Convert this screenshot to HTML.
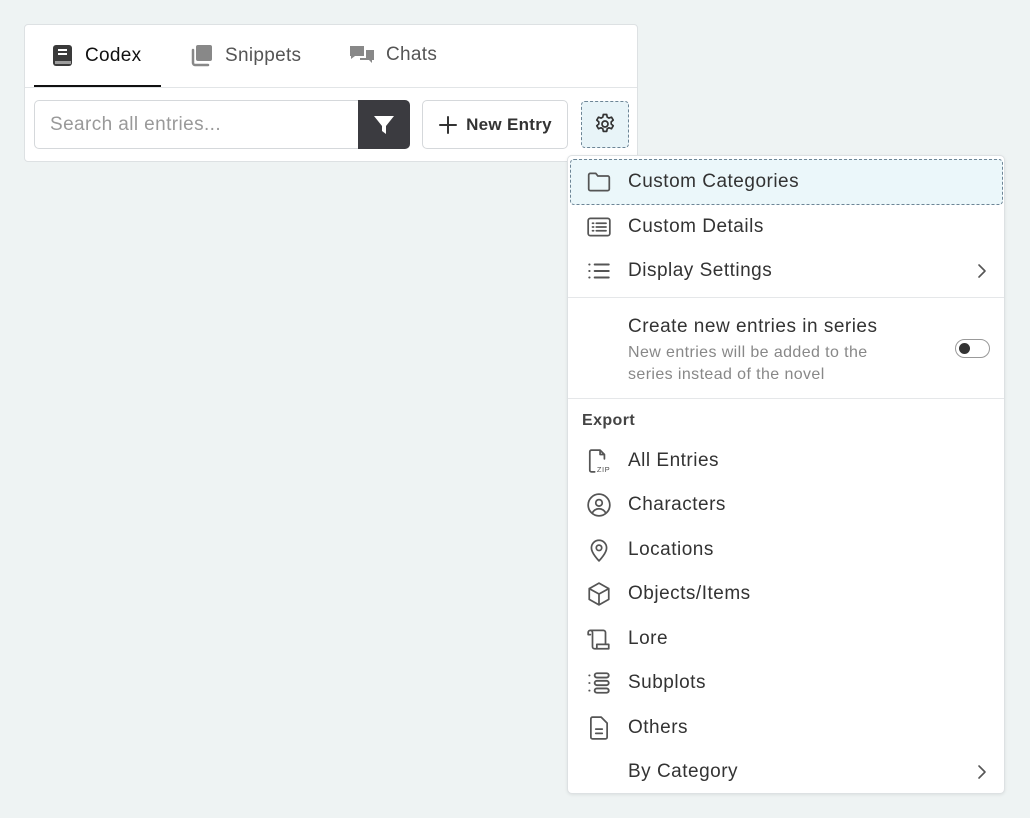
<!DOCTYPE html>
<html><head><style>
*{box-sizing:border-box;margin:0;padding:0}
body{width:1030px;height:818px;background:#eef3f3;font-family:"Liberation Sans",sans-serif;position:relative;overflow:hidden;color:#333}
.abs{position:absolute}
.card{left:24px;top:24px;width:614px;height:138px;background:#fff;border:1px solid #dde1e3;border-radius:4px}
.tab{position:absolute;top:44px;font-size:19px;display:flex;align-items:center;gap:11px;letter-spacing:.3px}
.menu{left:567px;top:155px;width:438px;height:639px;background:#fff;border:1px solid #dde1e3;border-radius:5px;box-shadow:0 1px 3px rgba(0,0,0,.08)}
.it{position:absolute;left:0;width:436px;height:44px;display:flex;align-items:center;font-size:19px;color:#333;letter-spacing:.5px}
.it svg{position:absolute;left:18px;width:26px;height:26px}
.it span{position:absolute;left:60px}
.chev{position:absolute;right:16px}
svg{stroke-linecap:round;stroke-linejoin:round}
</style></head><body>
<div class="abs card"></div>
<div class="tab" style="left:52px;color:#111"><svg width="22" height="24" viewBox="0 0 22 24"><rect x="1" y="1" width="19" height="21" rx="3" fill="#3a3a3a"/><rect x="6" y="5" width="9" height="2" fill="#fff"/><rect x="6" y="9" width="9" height="2" fill="#fff"/><rect x="3" y="17" width="16" height="3" fill="#fff" opacity=".5"/></svg>Codex</div>
<div class="tab" style="left:190px;color:#555"><svg width="24" height="24" viewBox="0 0 24 24"><rect x="6" y="1" width="16" height="16" rx="2" fill="#888"/><path d="M3 6v13a2 2 0 0 0 2 2h13" stroke="#888" stroke-width="2.5" fill="none"/></svg>Snippets</div>
<div class="tab" style="left:349px;color:#555"><svg width="26" height="22" viewBox="0 0 26 22"><path d="M1 2h14v10H6l-4 3v-3H1z" fill="#888"/><path d="M17 6h8v10h-2v3l-3-3h-9v-2h6z" fill="#888"/></svg>Chats</div>
<div class="abs" style="left:25px;top:87px;width:612px;height:1px;background:#e2e5e7"></div>
<div class="abs" style="left:34px;top:85px;width:127px;height:2px;background:#111"></div>
<div class="abs" style="left:34px;top:100px;width:376px;height:49px;border:1px solid #d5d8db;border-radius:5px;background:#fff"></div>
<div class="abs" style="left:50px;top:114px;font-size:19px;color:#999;letter-spacing:.4px">Search all entries...</div>
<div class="abs" style="left:358px;top:100px;width:52px;height:49px;background:#3b3b40;border-radius:0 5px 5px 0;display:flex;align-items:center;justify-content:center"><svg width="22" height="22" viewBox="0 0 22 22"><path d="M1 2h20l-8 10v8l-4-3v-5z" fill="#fff"/></svg></div>
<div class="abs" style="left:422px;top:100px;width:146px;height:49px;border:1px solid #d5d8db;border-radius:5px;background:#fff;display:flex;align-items:center;justify-content:center;gap:8px;font-size:17px;font-weight:bold;color:#333;letter-spacing:.3px"><svg width="20" height="20" viewBox="0 0 20 20"><path d="M10 2v16M2 10h16" stroke="#333" stroke-width="2"/></svg>New Entry</div>
<div class="abs" style="left:581px;top:101px;width:48px;height:47px;border:1.5px dashed #6d8596;border-radius:4px;background:#e8f4f8"><svg style="position:absolute;left:11px;top:10px" width="24" height="24" viewBox="0 0 24 24" fill="none" stroke="#333" stroke-width="1.7"><circle cx="12" cy="12" r="3"/><path d="M10.3 2.5h3.4l.5 2.6 1.8 1 2.5-.9 1.7 2.9-2 1.8v2.1l2 1.8-1.7 2.9-2.5-.9-1.8 1-.5 2.6h-3.4l-.5-2.6-1.8-1-2.5.9-1.7-2.9 2-1.8V9.9l-2-1.8 1.7-2.9 2.5.9 1.8-1z"/></svg></div>

<div class="abs menu">
<div class="abs" style="left:2px;top:3px;width:433px;height:46px;border:1.5px dashed #6d8596;border-radius:4px;background:#ebf7fa"></div>
<div class="it" style="top:4px"><svg viewBox="0 0 24 24" fill="none" stroke="#555" stroke-width="1.6"><path d="M2.5 5.5a1.5 1.5 0 0 1 1.5-1.5h5l2 2.5h9a1.5 1.5 0 0 1 1.5 1.5v10.5a1.5 1.5 0 0 1-1.5 1.5H4a1.5 1.5 0 0 1-1.5-1.5z"/></svg><span>Custom Categories</span></div>
<div class="it" style="top:49px"><svg viewBox="0 0 24 24" fill="none" stroke="#555" stroke-width="1.6"><rect x="2" y="4" width="20" height="16" rx="2"/><path d="M6 8.5h1M6 12h1M6 15.5h1M9.5 8.5h9M9.5 12h9M9.5 15.5h9"/></svg><span>Custom Details</span></div>
<div class="it" style="top:93px"><svg viewBox="0 0 24 24" fill="none" stroke="#555" stroke-width="1.8"><path d="M3 6h.3M3 12h.3M3 18h.3M8 6h13M8 12h13M8 18h13"/></svg><span>Display Settings</span><svg class="chev" style="left:auto;right:12px;width:20px;height:20px" viewBox="0 0 20 20" fill="none" stroke="#555" stroke-width="1.6"><path d="M7 4l6 6-6 6"/></svg></div>
<div class="abs" style="left:0;top:141px;width:436px;height:1px;background:#e5e7e9"></div>
<div class="abs" style="left:60px;top:160px;font-size:19px;color:#333;letter-spacing:.5px">Create new entries in series</div>
<div class="abs" style="left:60px;top:186px;font-size:16px;color:#888;line-height:22px;letter-spacing:.4px">New entries will be added to the<br>series instead of the novel</div>
<div class="abs" style="left:387px;top:183px;width:35px;height:19px;border:1.5px solid #999;border-radius:10px"><div style="position:absolute;left:3px;top:3px;width:11px;height:11px;border-radius:50%;background:#333"></div></div>
<div class="abs" style="left:0;top:242px;width:436px;height:1px;background:#e5e7e9"></div>
<div class="abs" style="left:14px;top:256px;font-size:16px;font-weight:bold;color:#444;letter-spacing:.4px">Export</div>
<div class="it" style="top:283px"><svg viewBox="0 0 24 24" fill="none" stroke="#555" stroke-width="1.6"><path d="M13 2H5a1.5 1.5 0 0 0-1.5 1.5v17A1.5 1.5 0 0 0 5 22h3M13 2l4 4v4M13 2v4h4"/><text x="10" y="22" font-size="7" fill="#555" stroke="none" font-family="Liberation Sans">ZIP</text></svg><span>All Entries</span></div>
<div class="it" style="top:327px"><svg viewBox="0 0 24 24" fill="none" stroke="#555" stroke-width="1.6"><circle cx="12" cy="12" r="10"/><circle cx="12" cy="10" r="3"/><path d="M6 19c1.5-2.5 3.5-3.5 6-3.5s4.5 1 6 3.5"/></svg><span>Characters</span></div>
<div class="it" style="top:372px"><svg viewBox="0 0 24 24" fill="none" stroke="#555" stroke-width="1.6"><path d="M12 22s7-7 7-12a7 7 0 0 0-14 0c0 5 7 12 7 12z"/><circle cx="12" cy="10" r="2.5"/></svg><span>Locations</span></div>
<div class="it" style="top:416px"><svg viewBox="0 0 24 24" fill="none" stroke="#555" stroke-width="1.6"><path d="M12 2l9 5v10l-9 5-9-5V7z M3 7l9 5 9-5M12 12v10"/></svg><span>Objects/Items</span></div>
<div class="it" style="top:461px"><svg viewBox="0 0 24 24" fill="none" stroke="#555" stroke-width="1.6"><path d="M2 6a2 2 0 0 1 4 0v13a2 2 0 0 0 2 2h13v-4H10v3M4 4h12a2 2 0 0 1 2 2v11M2 6v2h2"/></svg><span>Lore</span></div>
<div class="it" style="top:505px"><svg viewBox="0 0 24 24" fill="none" stroke="#555" stroke-width="1.7"><path d="M3 5h.3M3 12h.3M3 19h.3"/><rect x="8" y="3" width="13" height="4" rx="2"/><rect x="8" y="10" width="13" height="4" rx="2"/><rect x="8" y="17" width="13" height="4" rx="2"/></svg><span>Subplots</span></div>
<div class="it" style="top:550px"><svg viewBox="0 0 24 24" fill="none" stroke="#555" stroke-width="1.6"><path d="M14 2H6a1.5 1.5 0 0 0-1.5 1.5v17A1.5 1.5 0 0 0 6 22h12a1.5 1.5 0 0 0 1.5-1.5V7.5z M9 13h6M9 17h6"/></svg><span>Others</span></div>
<div class="it" style="top:594px"><span>By Category</span><svg class="chev" style="left:auto;right:12px;width:20px;height:20px" viewBox="0 0 20 20" fill="none" stroke="#555" stroke-width="1.6"><path d="M7 4l6 6-6 6"/></svg></div>
</div>
</body></html>
